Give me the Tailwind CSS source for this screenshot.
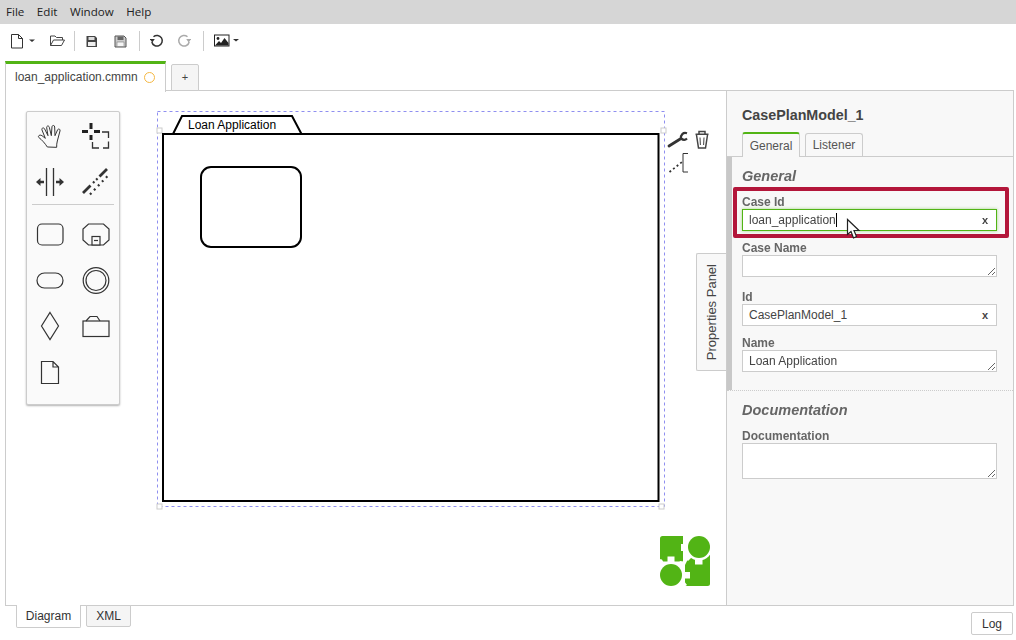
<!DOCTYPE html>
<html>
<head>
<meta charset="utf-8">
<script src="https://cdn.jsdelivr.net/npm/@tailwindcss/browser@4"></script>
</head>
<body class="bg-white">
<div class="relative w-[1016px] h-[640px] overflow-hidden flex flex-col bg-white font-['Liberation_Sans',Arial,sans-serif]">

  <!-- menu -->
  <div class="h-6 shrink-0 bg-[#d6d6d6] flex items-center pl-[6px] gap-[12.500px] text-[11.600px] text-[#222] font-['Open_Sans',sans-serif]">
    <span>File</span><span>Edit</span><span>Window</span><span>Help</span>
  </div>

  <!-- toolbar -->
  <div class="h-9 shrink-0 flex items-center pb-[2px]">
    <svg class="ml-[10px]" width="26" height="16" viewBox="10 32 26 16" fill="none"><path d="M11.500 33.500h7l4 4v9.500h-11z M18.500 33.500v4h4" stroke="#333" stroke-width="1"/><path d="M29 38.500h6l-3 2.500z" fill="#333"/></svg>
    <svg class="ml-[13px]" width="17" height="14" viewBox="49 34 17 14" fill="none"><path d="M50.500 45.500v-9.500h4.500l1.500 1.500h6v2.500 M50.500 45.500h11l3-5.500h-11z" stroke="#444" stroke-width="1"/></svg>
    <div class="ml-[8px] w-px h-5 bg-[#ccc]"></div>
    <svg class="ml-[10px]" width="13" height="13" viewBox="85.500 33.500 13 13"><path d="M87 34.500h8.500l2 2v9h-10.500z" fill="#444"/><rect x="89" y="35.500" width="6" height="3" fill="#ddd"/><rect x="88.500" y="40.500" width="7.500" height="4" fill="#eee"/></svg>
    <svg class="ml-[16px]" width="13" height="13" viewBox="114.500 33.500 13 13" fill="none"><path d="M115.500 34.500h9l2 2v9h-11z" fill="#ccc" stroke="#555"/><rect x="118" y="35" width="6" height="3.500" fill="#666"/><rect x="117.500" y="40.500" width="7" height="4.500" fill="#f5f5f5" stroke="#666" stroke-width=".5"/></svg>
    <div class="ml-[12px] w-px h-5 bg-[#ccc]"></div>
    <svg class="ml-[10px]" width="14" height="14" viewBox="150 33.500 14 14" fill="none"><path d="M153.500 36.200A5.300 5.300 0 1 1 151.800 41.500" stroke="#333" stroke-width="1.500"/><path d="M149.800 38.500h5l-2.500 3.500z" fill="#333"/></svg>
    <svg class="ml-[13px]" width="14" height="14" viewBox="178 33.500 14 14" fill="none"><path d="M188.500 36.200A5.300 5.300 0 1 0 190.200 41.500" stroke="#aaa" stroke-width="1.500"/><path d="M187.200 38.500h5l-2.500 3.500z" fill="#aaa"/></svg>
    <div class="ml-[12px] w-px h-5 bg-[#ccc]"></div>
    <svg class="ml-[10px]" width="26" height="14" viewBox="213 33.500 26 14" fill="none"><rect x="213.500" y="34.500" width="14.500" height="11" stroke="#222"/><path d="M214 45l4-4.500 2 2 3.500-5 4 5v2.500z" fill="#222"/><circle cx="217" cy="38" r="1.400" fill="#222"/><path d="M232 38.500h6l-3 2.500z" fill="#333"/></svg>
  </div>

  <!-- file tabs -->
  <div class="h-[31px] shrink-0 flex items-end relative pl-[5px]">
    <div class="w-[161px] h-[31px] pb-[2px] border-t-[3px] border-[#52b415] border-x border-x-[#ccc] bg-white flex items-center pl-[9px] gap-[6px] text-[12px] text-[#444] z-10 -mb-px">
      <span>loan_application.cmmn</span>
      <span class="w-[11px] h-[11px] rounded-full border-[1.500px] border-[#f5b842]"></span>
    </div>
    <div class="ml-[5px] w-[28px] h-[27px] border border-[#ccc] rounded-t-[2px] bg-[#f5f5f5] flex items-center justify-center text-[11px] text-[#444]">+</div>
  </div>

  <!-- main -->
  <div class="h-[516px] shrink-0 mx-[5px] w-[1009px] border border-[#ccc] flex -mt-px">
    <!-- canvas -->
    <div class="relative w-[720px] h-full shrink-0 bg-white">
      <svg class="absolute inset-0" width="720" height="514" viewBox="6 91 720 514" fill="none">
        <rect x="157.500" y="111.500" width="507" height="395" stroke="#8f8ff0" stroke-dasharray="3 3"/>
        <rect x="157" y="128" width="5" height="5" fill="#fff" stroke="#ccc"/>
        <rect x="661" y="128" width="5" height="5" fill="#fff" stroke="#ccc"/>
        <rect x="157" y="504" width="5" height="5" fill="#fff" stroke="#ccc"/>
        <rect x="659" y="504" width="5" height="5" fill="#fff" stroke="#ccc"/>
        <path d="M173 134L182 116H292L301.500 134" fill="#fff" stroke="#000" stroke-width="2"/>
        <rect x="163" y="134" width="495.500" height="367" fill="#fff" stroke="#000" stroke-width="2"/>
        <text x="188" y="129" font-family="Liberation Sans, Arial, sans-serif" font-size="12" fill="#000">Loan Application</text>
        <rect x="201" y="167" width="100" height="80" rx="10" fill="#fff" stroke="#000" stroke-width="2"/>
        <!-- context pad -->
        <path d="M669 146L681 138.500" stroke="#333" stroke-width="2.800" stroke-linecap="round"/>
        <path d="M687 133.300C683 132 680.500 135 681 138.500C683 140 685.500 140 687 138.500" stroke="#333" stroke-width="2.200"/>
        <path d="M695.500 134.200h13 M699 134v-2.500h6v2.500" stroke="#444" stroke-width="1.500"/>
        <path d="M696.500 135L698.500 148H705.500L707.500 135" stroke="#444" stroke-width="1.500"/>
        <path d="M700 137.500l.4 7.500 M704 137.500l-.4 7.500" stroke="#444"/>
        <path d="M669.500 172L682 162" stroke="#333" stroke-width="1.800" stroke-dasharray="2 2.600"/>
        <path d="M688 153.500h-5v18.500h5" stroke="#333"/>
        <!-- logo -->
        <path d="M662.500 536H683V561.500H662.500A2.500 2.500 0 0 1 660 559V538.500A2.500 2.500 0 0 1 662.500 536Z" fill="#52b415"/>
        <path d="M690 555H710V583.500A2.500 2.500 0 0 1 707.500 586H685V565Z" fill="#52b415"/>
        <g fill="#fff">
          <circle cx="699" cy="547" r="13.500"/>
          <path d="M681 544h6v7h-6z M684 557l4-4 4 4-4 4z M695 560h7.500v4.500h-7.500z"/>
          <circle cx="671" cy="575" r="13.500"/>
          <path d="M667.500 556.500h7v6h-7z M680 561l4 1 1 4-4 2-3-3z M684 572h6v6.500h-6z M679 586l5-5 3 4-3 2z M659 559l3 .5 2 4-3 1.500-2-2z"/>
        </g>
        <circle cx="699" cy="547" r="11" fill="#52b415"/>
        <circle cx="671" cy="575" r="11" fill="#52b415"/>
      </svg>

      <!-- palette -->
      <div class="absolute left-[20px] top-[20px] w-[94px] h-[294px] bg-[#fafafa] border border-[#ccc] rounded-[2px] shadow-[0_1px_2px_rgba(0,0,0,0.3)]">
        <svg class="absolute -left-px -top-px" width="94" height="294" viewBox="26 111 94 294" fill="none">
          <g transform="translate(20 105) scale(.33333)" stroke="#333" stroke-width="3" stroke-linejoin="round">
            <path d="M82 126C75 115 66 105 56 97C53 92 60 88 66 92L76 100L66 75C64 69 71 66 74 72L84 92L80 68C79 62 87 61 88 67L94 92L96 65C97 60 104 60 104 66L105 92L113 74C116 70 122 73 120 78L112 108C110 115 110 120 110 127Z"/>
          </g>
          <path d="M91 123v6 M91 135v5 M82 131.500h6 M94 131.500h6" stroke="#222" stroke-width="3"/>
          <path d="M102 132H108.500V138 M108.500 141.500V148H103 M99 148H92.500V142" stroke="#333" stroke-width="1.300"/>
          <path d="M46.500 168v28 M53.500 168v28" stroke="#333" stroke-width="1.300"/>
          <path d="M36 182l4.500-4v2.700h3.500v2.600h-3.500v2.700z M64 182l-4.500-4v2.700h-3.500v2.600h3.500v2.700z" fill="#333"/>
          <path d="M83 193L90.500 185.500 M99.500 176.500L107 169" stroke="#333" stroke-width="2.800"/>
          <path d="M93 183L98 178" stroke="#333" stroke-width="2.200" stroke-dasharray="2 2.400"/>
          <path d="M90 194.500L108 175.500" stroke="#333" stroke-width="2.200" stroke-dasharray="2 3.800"/>
          <path d="M32 204.500h82" stroke="#ccc"/>
          <g stroke="#333" stroke-width="1.200">
            <rect x="37.500" y="224" width="25.500" height="21" rx="4.500"/>
            <path d="M88.500 224h15l5.500 5v11l-5.500 5h-15l-5.500-5v-11z"/>
            <rect x="92" y="236.500" width="8" height="8.500" fill="#fafafa"/>
            <path d="M94 240.500h4"/>
            <rect x="37" y="273" width="26" height="15" rx="7.500"/>
            <circle cx="96" cy="280.500" r="12.800"/>
            <circle cx="96" cy="280.500" r="10"/>
            <path d="M50 312.500L58.500 326L50 339.500L41.500 326Z"/>
            <rect x="83" y="321" width="26" height="15.500"/>
            <path d="M86 321L90 316.500H97L100 321"/>
            <path d="M41.500 361.500H53L58.500 367V383.500H41.500Z M53 361.500V367H58.500"/>
          </g>
        </svg>
      </div>

      <!-- properties tab -->
      <div class="absolute right-0 top-[162px] w-[30px] h-[118px] bg-[#f8f8f8] border border-r-0 border-[#ccc] rounded-l-[2px] flex items-center justify-center">
        <span class="[writing-mode:vertical-rl] rotate-180 text-[13px] text-[#444] whitespace-nowrap">Properties Panel</span>
      </div>
    </div>

    <!-- panel -->
    <div class="relative flex-1 bg-[#f8f8f8] border-l border-[#ccc] flex flex-col min-w-0">
      <div class="h-[41px] shrink-0 pl-[15px] pt-[14px] text-[14.300px] leading-[20px] font-bold text-[#444]">CasePlanModel_1</div>
      <div class="h-[25px] shrink-0 border-b border-[#ccc] flex items-end pl-[15px] gap-[5px] text-[12px] text-[#555]">
        <div class="w-[58px] h-[25px] -mb-px bg-[#f8f8f8] border border-b-0 border-[#ccc] border-t-2 border-t-[#52b415] rounded-t-[3px] flex items-center justify-center">General</div>
        <div class="w-[58px] h-[23px] bg-[#f8f8f8] border border-b-0 border-[#ccc] rounded-t-[3px] flex items-center justify-center">Listener</div>
      </div>

      <div class="h-[234px] shrink-0 border-b border-dotted border-[#ccc]">
        <div class="h-[233px] border-l-[5px] border-solid border-[#c8c8c8] pl-[10px] pr-[15px]">
          <div class="h-[28px] pt-[10px] text-[14.500px] leading-[18px] font-bold italic text-[#666]">General</div>
          <div class="h-[24px] pt-[10px] text-[12px] leading-[14px] font-bold text-[#666]">Case Id</div>
          <div class="relative h-[22px] w-[255px] border border-[#52b415] shadow-[0_0_3px_rgba(82,180,21,0.5)] bg-white flex items-center pl-[6px] text-[12px] text-[#444]">
            <span>loan_application</span><span class="w-px h-[14px] bg-black"></span>
            <span class="absolute right-[8px] text-[11px] font-bold text-[#444]">x</span>
          </div>
          <div class="h-[24px] pt-[10px] text-[12px] leading-[14px] font-bold text-[#666]">Case Name</div>
          <textarea class="block w-[255px] h-[22px] border border-[#ccc] bg-white resize outline-none"></textarea>
          <div class="h-[27px] pt-[13px] text-[12px] leading-[14px] font-bold text-[#666]">Id</div>
          <div class="relative h-[22px] w-[255px] border border-[#ccc] bg-white flex items-center pl-[6px] text-[12px] text-[#444]">
            <span>CasePlanModel_1</span>
            <span class="absolute right-[8px] text-[11px] font-bold text-[#444]">x</span>
          </div>
          <div class="h-[24px] pt-[10px] text-[12px] leading-[14px] font-bold text-[#666]">Name</div>
          <textarea class="block w-[255px] h-[22px] border border-[#ccc] bg-white resize outline-none pl-[6px] pt-[3px] text-[12px] leading-[14px] text-[#444] overflow-hidden">Loan Application</textarea>
        </div>
      </div>

      <div class="pl-[15px] pr-[15px]">
        <div class="h-[37px] pt-[10px] text-[14.500px] leading-[18px] font-bold italic text-[#666]">Documentation</div>
        <div class="h-[15px] text-[12px] leading-[14px] pt-[1px] font-bold text-[#666]">Documentation</div>
        <textarea class="block w-[255px] h-[36px] border border-[#ccc] bg-white resize outline-none"></textarea>
      </div>
    </div>
  </div>

  <!-- bottom tabs -->
  <div class="relative h-[35px] shrink-0 flex items-start pl-[16px] text-[12px] text-[#333]">
    <div class="w-[65px] h-[23px] -mt-px bg-white border border-t-0 border-[#ccc] rounded-b-[2px] flex items-center justify-center z-10">Diagram</div>
    <div class="ml-[5px] w-[45px] h-[22px] -mt-px bg-[#f5f5f5] border border-[#ccc] rounded-b-[2px] flex items-center justify-center">XML</div>
    <div class="ml-auto mr-[3px] mt-[6px] w-[42px] h-[23px] border border-[#ccc] rounded-[2px] flex items-center justify-center">Log</div>
  </div>

  <!-- annotation overlay -->
  <div class="absolute left-[733px] top-[187px] w-[276px] h-[51px] border-4 border-[#b3163a] rounded-[2px] pointer-events-none"></div>
  <svg class="absolute left-[846px] top-[218px]" width="16" height="22" viewBox="0 0 16 22"><path d="M1.500 1.500V16.500L5 13.500L7.500 20L10.500 18.500L8 12.500H13Z" fill="#fff" stroke="#222" stroke-width="1.200"/></svg>
</div>
</body>
</html>
